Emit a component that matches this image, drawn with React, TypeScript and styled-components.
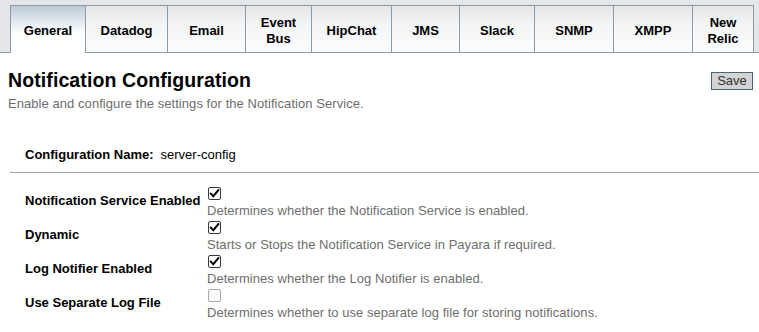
import React from "react";
import styled, { createGlobalStyle } from "styled-components";

const Global = createGlobalStyle`
  html, body { margin: 0; padding: 0; background: #fff; }
  body { font-family: "Liberation Sans", Arial, sans-serif; font-size: 13px; color: #000; }
`;

const TabBar = styled.div`
  display: flex;
  align-items: flex-end;
  height: 53px;
  padding: 0 0 0 10px;
  background: #e4e6e9;
  border-bottom: 1px solid #8d9ba6;
  box-sizing: border-box;
`;

const Tab = styled.div<{ $w: number; $active?: boolean; $last?: boolean }>`
  box-sizing: border-box;
  width: ${(p) => p.$w + (p.$last ? 1 : 0)}px;
  height: ${(p) => (p.$active ? 48 : 47)}px;
  margin-bottom: ${(p) => (p.$active ? -1 : 0)}px;
  border-top: 1px solid #8d9ba6;
  border-left: 1px solid #8d9ba6;
  border-right: ${(p) => (p.$last ? "1px solid #8d9ba6" : "none")};
  background: ${(p) =>
    p.$active
      ? "linear-gradient(to bottom, #bccad6 0%, #e4ebf1 35%, #ffffff 60%)"
      : "linear-gradient(to bottom, #e6e6e7 0%, #f3f4f5 40%, #fbfdfe 100%)"};
  display: flex;
  align-items: center;
  justify-content: center;
  text-align: center;
  font-weight: bold;
  font-size: 13px;
  line-height: 16px;
  color: #000;
  padding-top: 3px;
`;

const Content = styled.div`
  padding: 0 0 0 8px;
`;

const HeaderRow = styled.div`
  display: flex;
  justify-content: space-between;
  align-items: flex-start;
  margin-top: 16px;
  padding-right: 6px;
`;

const Title = styled.h1`
  margin: 0;
  font-size: 19.5px;
  line-height: 22px;
  font-weight: bold;
  letter-spacing: 0.1px;
  color: #000;
`;

const SaveButton = styled.button`
  margin-top: 3px;
  box-sizing: border-box;
  height: 18px;
  width: 42px;
  padding: 0;
  background: #d4d4d4;
  border: 1px solid #4e6272;
  font-family: "Liberation Sans", Arial, sans-serif;
  font-size: 13px;
  line-height: 16px;
  color: #333;
`;

const Subtitle = styled.p`
  margin: 5px 0 0;
  font-size: 13px;
  line-height: 15px;
  letter-spacing: 0.06px;
  color: #6e6e6e;
`;

const ConfigName = styled.div`
  display: flex;
  gap: 7px;
  margin: 36px 0 0 2px;
  padding: 0 0 9px 15px;
  line-height: 16px;
  border-bottom: 1px solid #9ea6ac;
`;

const Strong = styled.span`
  font-weight: bold;
`;

const Rows = styled.div`
  margin-top: 12px;
  padding-left: 17px;
`;

const Row = styled.div`
  display: grid;
  grid-template-columns: 182px 1fr;
  height: 34px;
`;

const Label = styled.div`
  font-weight: bold;
  padding-top: 7px;
  line-height: 17px;
`;

const Field = styled.div`
  display: flex;
  flex-direction: column;
`;

const BoxLine = styled.div`
  height: 17px;
  padding: 2px 0 0 1px;
  box-sizing: border-box;
`;

const Box = styled.span<{ $on: boolean }>`
  display: block;
  box-sizing: border-box;
  width: 13px;
  height: 13px;
  border-radius: 2px;
  border: 1px solid ${(p) => (p.$on ? "#3a3a3a" : "#a9a9a9")};
  background: ${(p) => (p.$on ? "#fff" : "#fbfbfb")};
  svg { display: block; }
`;

const Desc = styled.div`
  line-height: 17px;
  letter-spacing: 0.04px;
  color: #6e6e6e;
`;

const tabs: { label: React.ReactNode; w: number }[] = [
  { label: "General", w: 75 },
  { label: "Datadog", w: 82 },
  { label: "Email", w: 78 },
  { label: <>Event<br />Bus</>, w: 66 },
  { label: "HipChat", w: 80 },
  { label: "JMS", w: 68 },
  { label: "Slack", w: 75 },
  { label: "SNMP", w: 79 },
  { label: "XMPP", w: 79 },
  { label: <>New<br />Relic</>, w: 61 },
];

const rows = [
  { label: "Notification Service Enabled", on: true, desc: "Determines whether the Notification Service is enabled." },
  { label: "Dynamic", on: true, desc: "Starts or Stops the Notification Service in Payara if required." },
  { label: "Log Notifier Enabled", on: true, desc: "Determines whether the Log Notifier is enabled." },
  { label: "Use Separate Log File", on: false, desc: "Determines whether to use separate log file for storing notifications." },
];

const Check = ({ on }: { on: boolean }) => (
  <Box $on={on}>
    {on && (
      <svg width="11" height="11" viewBox="0 0 11 11">
        <path d="M1.8 5.6 L4.3 8.2 L9.3 2.2" fill="none" stroke="#000" strokeWidth="2" strokeLinecap="square" />
      </svg>
    )}
  </Box>
);

export default function App() {
  return (
    <>
      <Global />
      <TabBar>
        {tabs.map((t, i) => (
          <Tab key={i} $w={t.w} $active={i === 0} $last={i === tabs.length - 1}>
            <span>{t.label}</span>
          </Tab>
        ))}
      </TabBar>
      <Content>
        <HeaderRow>
          <Title>Notification Configuration</Title>
          <SaveButton>Save</SaveButton>
        </HeaderRow>
        <Subtitle>Enable and configure the settings for the Notification Service.</Subtitle>
        <ConfigName>
          <Strong>Configuration Name:</Strong>
          <span>server-config</span>
        </ConfigName>
        <Rows>
          {rows.map((r) => (
            <Row key={r.label}>
              <Label>{r.label}</Label>
              <Field>
                <BoxLine>
                  <Check on={r.on} />
                </BoxLine>
                <Desc>{r.desc}</Desc>
              </Field>
            </Row>
          ))}
        </Rows>
      </Content>
    </>
  );
}
